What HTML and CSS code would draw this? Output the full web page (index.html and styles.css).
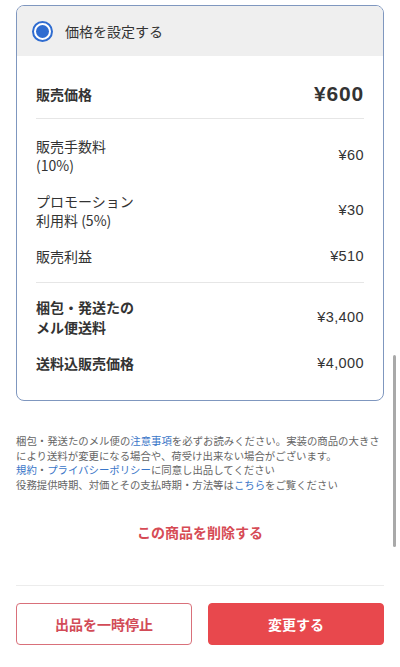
FILE: index.html
```html
<!DOCTYPE html>
<html lang="ja">
<head>
<meta charset="utf-8">
<link rel="stylesheet" href="styles.css">
</head>
<body>
<div class="page">
  <div class="card">
    <div class="card-head">
      <span class="radio"><span class="radio-dot"></span></span>
      <span class="head-title">価格を設定する</span>
    </div>
    <div class="sec sec-1">
      <div class="row">
        <span class="label bold">販売価格</span>
        <span class="price-big">¥600</span>
      </div>
    </div>
    <div class="sec sec-2">
      <div class="row">
        <span class="label">販売手数料<br>(10%)</span>
        <span class="val">¥60</span>
      </div>
      <div class="row">
        <span class="label">プロモーション<br>利用料 (5%)</span>
        <span class="val">¥30</span>
      </div>
      <div class="row">
        <span class="label">販売利益</span>
        <span class="val">¥510</span>
      </div>
    </div>
    <div class="sec sec-3">
      <div class="row">
        <span class="label bold tall">梱包・発送たの<br>メル便送料</span>
        <span class="val">¥3,400</span>
      </div>
      <div class="row">
        <span class="label bold tall">送料込販売価格</span>
        <span class="val">¥4,000</span>
      </div>
    </div>
  </div>

  <p class="note">梱包・発送たのメル便の<a class="link">注意事項</a>を必ずお読みください。実装の商品の大きさ<br>により送料が変更になる場合や、荷受け出来ない場合がございます。<br><a class="link">規約</a>・<a class="link">プライバシーポリシー</a>に同意し出品してください<br>役務提供時期、対価とその支払時期・方法等は<a class="link">こちら</a>をご覧ください</p>

  <div class="delete">この商品を削除する</div>

  <div class="actions">
    <button class="btn btn-outline">出品を一時停止</button>
    <button class="btn btn-fill">変更する</button>
  </div>
</div>
<div class="scrollbar"></div>
</body>
</html>
```

FILE: styles.css
```css
* { box-sizing: border-box; }
html, body {
  margin: 0;
  padding: 0;
  background: #ffffff;
}
body {
  font-family: "Noto Sans CJK JP", "Noto Sans", sans-serif;
  color: #333333;
  width: 400px;
  height: 667px;
  overflow: hidden;
}
.page {
  padding: 5px 16px 0 16px;
}
.card {
  border: 1px solid #7f97bf;
  border-radius: 8px;
  overflow: hidden;
}
.card-head {
  height: 50px;
  background: #efefef;
  display: flex;
  align-items: center;
  padding-left: 15px;
  gap: 12px;
}
.radio {
  width: 21px;
  height: 21px;
  border-radius: 50%;
  border: 2px solid #2f6cd0;
  display: flex;
  align-items: center;
  justify-content: center;
  background: #ffffff;
}
.radio-dot {
  width: 13px;
  height: 13px;
  border-radius: 50%;
  background: #2f6cd0;
}
.head-title {
  font-size: 14px;
  line-height: 20px;
  color: #333333;
}
.sec {
  margin: 0 19px 0 19px;
  display: flex;
  flex-direction: column;
}
.sec-1 {
  padding: 28px 0 14px;
  border-bottom: 1px solid #e6e6e6;
}
.sec-2 {
  padding: 17.5px 0 16.5px;
  gap: 17px;
  border-bottom: 1px solid #e6e6e6;
}
.sec-3 {
  padding: 14px 0 27px;
  gap: 16px;
}
.row {
  display: flex;
  justify-content: space-between;
  align-items: center;
}
.label {
  font-size: 14px;
  line-height: 19px;
}
.label.tall {
  line-height: 20px;
}
.bold {
  font-weight: 700;
}
.price-big {
  font-family: "Liberation Sans", Arial, sans-serif;
  font-weight: 700;
  font-size: 21px;
  line-height: 20px;
  letter-spacing: 0.8px;
  color: #333333;
}
.val {
  font-family: "Liberation Sans", Arial, sans-serif;
  font-size: 14.5px;
  letter-spacing: 0.4px;
  line-height: 19px;
  color: #333333;
}
.note {
  margin: 33px 0 0 0;
  font-size: 10.4px;
  line-height: 14.7px;
  color: #666666;
  white-space: nowrap;
}
.link {
  color: #3a76c8;
}
.delete {
  margin-top: 29px;
  text-align: center;
  font-size: 14px;
  line-height: 20px;
  font-weight: 700;
  color: #d64b55;
  padding-bottom: 43px;
  border-bottom: 1px solid #ececec;
}
.actions {
  display: flex;
  gap: 16px;
  padding-top: 17px;
}
.btn {
  flex: 1;
  height: 42px;
  border-radius: 4px;
  font-family: "Noto Sans CJK JP", "Noto Sans", sans-serif;
  font-size: 14px;
  font-weight: 700;
  cursor: pointer;
}
.btn-outline {
  background: #ffffff;
  border: 1px solid #d9707a;
  color: #d24b57;
}
.btn-fill {
  background: #e8484d;
  border: 1px solid #e8484d;
  color: #ffffff;
}
.scrollbar {
  position: fixed;
  left: 393px;
  top: 355px;
  width: 3px;
  height: 192px;
  border-radius: 2px;
  background: #a9a9a9;
}
```
